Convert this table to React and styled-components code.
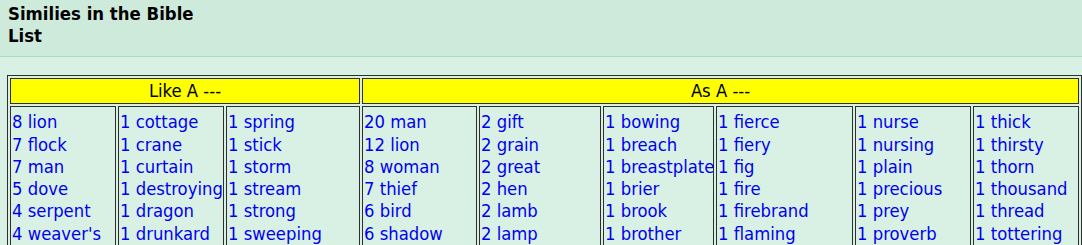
import React from "react";
import styled, { createGlobalStyle } from "styled-components";

const Global = createGlobalStyle`
  html, body { margin: 0; padding: 0; background: #d9f1e5; }
  body { font-family: "DejaVu Sans Condensed", "DejaVu Sans", sans-serif; font-stretch: semi-condensed; }
`;

const Header = styled.header`
  background: #cdeadb;
  border-bottom: 1px solid #a2dcc3;
  padding: 3px 8px 9px;
`;

const Title = styled.h1`
  margin: 0;
  font-size: 18.4px;
  line-height: 22px;
  font-weight: bold;
  color: #000;
`;

const Main = styled.main`
  padding: 18px 0 0 7px;
`;

const Table = styled.table`
  border: 1px solid #2e2e2e;
  border-collapse: separate;
  border-spacing: 2px;
  table-layout: fixed;
  width: 1075px;
  font-size: 18.3px;
  line-height: 22.3px;
`;

const HeadCell = styled.th`
  background: #ffff00;
  border: 1px solid #2e2e2e;
  padding: 1px;
  font-weight: normal;
  color: #000;
  text-align: center;
  box-sizing: border-box;
`;

const ListCell = styled.td`
  border: 1px solid #2e2e2e;
  padding: 4px 1px 30px;
  vertical-align: top;
  white-space: nowrap;
  overflow: visible;
  color: #0000f0;
  box-sizing: border-box;
`;

const Item = styled.div``;

const widths = [106, 106, 134, 115, 122, 111, 137, 116, 106];

const columns = [
  ["8 lion", "7 flock", "7 man", "5 dove", "4 serpent", "4 weaver's"],
  ["1 cottage", "1 crane", "1 curtain", "1 destroying", "1 dragon", "1 drunkard"],
  ["1 spring", "1 stick", "1 storm", "1 stream", "1 strong", "1 sweeping"],
  ["20 man", "12 lion", "8 woman", "7 thief", "6 bird", "6 shadow"],
  ["2 gift", "2 grain", "2 great", "2 hen", "2 lamb", "2 lamp"],
  ["1 bowing", "1 breach", "1 breastplate", "1 brier", "1 brook", "1 brother"],
  ["1 fierce", "1 fiery", "1 fig", "1 fire", "1 firebrand", "1 flaming"],
  ["1 nurse", "1 nursing", "1 plain", "1 precious", "1 prey", "1 proverb"],
  ["1 thick", "1 thirsty", "1 thorn", "1 thousand", "1 thread", "1 tottering"],
];

export default function App() {
  return (
    <>
      <Global />
      <Header>
        <Title>
          Similies in the Bible
          <br />
          List
        </Title>
      </Header>
      <Main>
        <Table>
          <colgroup>
            {widths.map((w, i) => (
              <col key={i} style={{ width: w }} />
            ))}
          </colgroup>
          <thead>
            <tr>
              <HeadCell colSpan={3}>Like A ---</HeadCell>
              <HeadCell colSpan={6}>As A ---</HeadCell>
            </tr>
          </thead>
          <tbody>
            <tr>
              {columns.map((col, i) => (
                <ListCell key={i}>
                  {col.map((t) => (
                    <Item key={t}>{t}</Item>
                  ))}
                </ListCell>
              ))}
            </tr>
          </tbody>
        </Table>
      </Main>
    </>
  );
}
